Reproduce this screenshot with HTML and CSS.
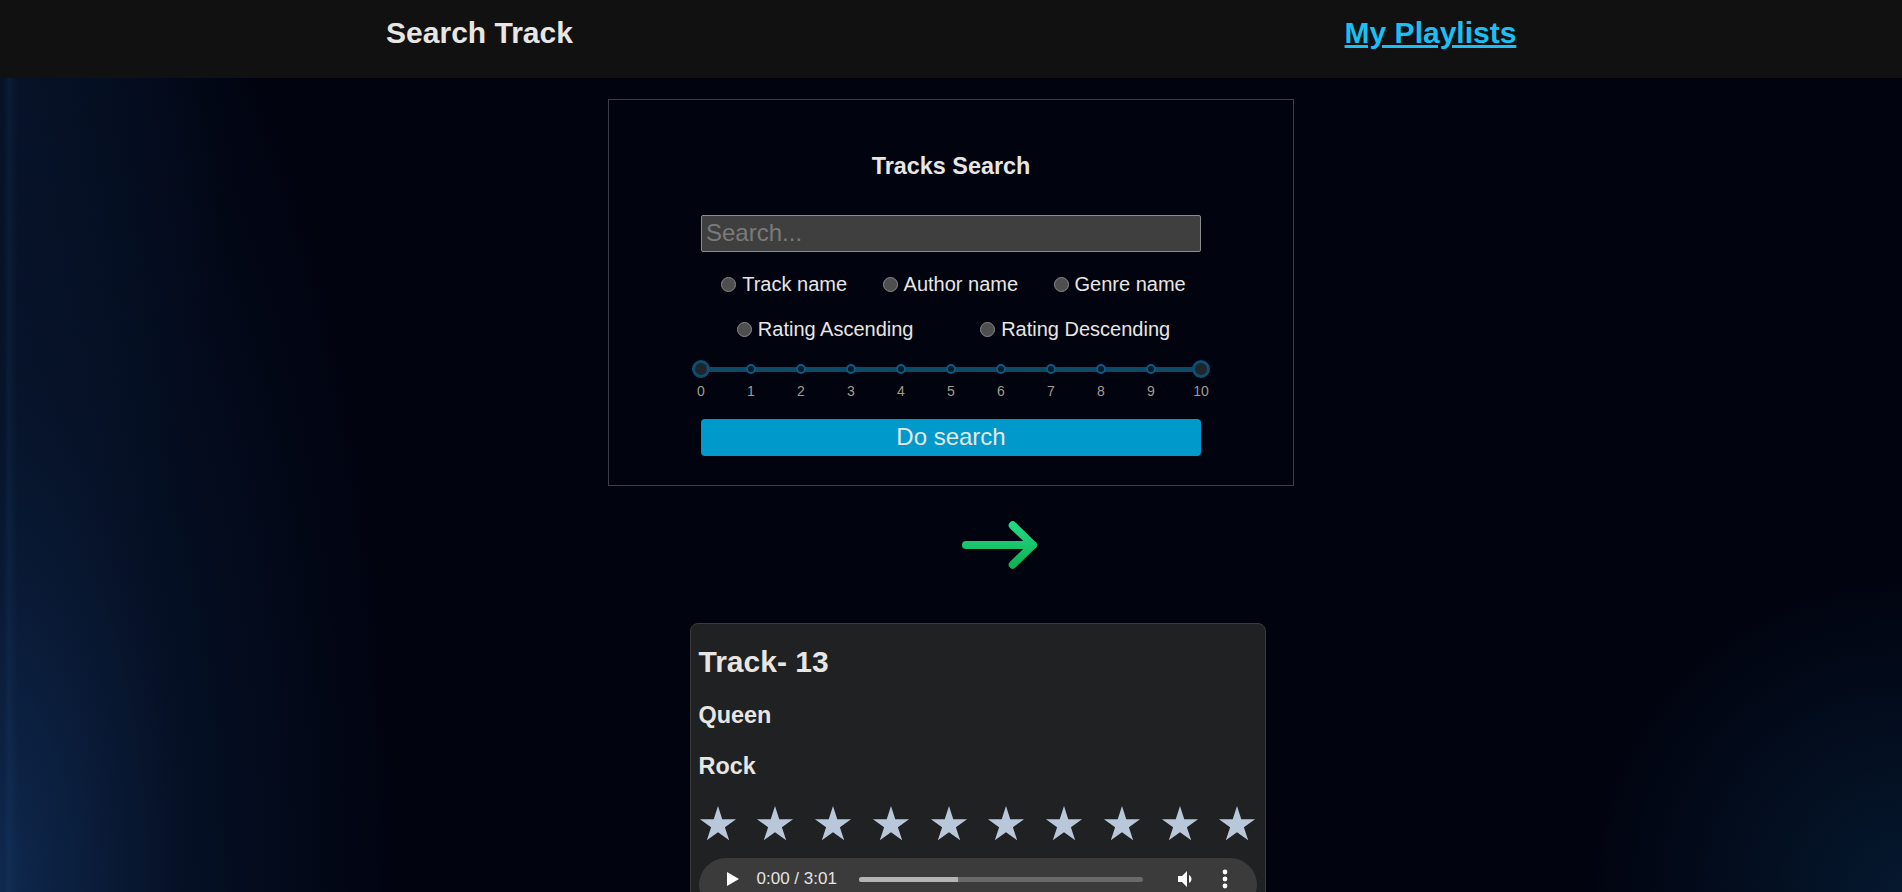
FILE: index.html
```html
<!DOCTYPE html>
<html lang="en">
<head>
<meta charset="utf-8">
<title>Search Track</title>
<link rel="stylesheet" href="styles.css">
</head>
<body>
<header class="topbar">
  <div class="topbar-cell"><h2 class="topbar-title">Search Track</h2></div>
  <div class="topbar-cell"><a class="topbar-link" href="#">My Playlists</a></div>
</header>

<main class="page">
  <section class="search-panel">
    <h3 class="panel-title">Tracks Search</h3>
    <input class="search-input" type="text" placeholder="Search...">

    <div class="option-row option-row--first">
      <label class="option"><input class="option-radio" type="radio" name="field">Track name</label>
      <label class="option"><input class="option-radio" type="radio" name="field">Author name</label>
      <label class="option"><input class="option-radio" type="radio" name="field">Genre name</label>
    </div>
    <div class="option-row option-row--second">
      <label class="option"><input class="option-radio" type="radio" name="order">Rating Ascending</label>
      <label class="option"><input class="option-radio" type="radio" name="order">Rating Descending</label>
    </div>

    <div class="rating-range">
      <div class="range-track">
        <span class="range-dot range-dot--handle"></span>
        <span class="range-dot"></span>
        <span class="range-dot"></span>
        <span class="range-dot"></span>
        <span class="range-dot"></span>
        <span class="range-dot"></span>
        <span class="range-dot"></span>
        <span class="range-dot"></span>
        <span class="range-dot"></span>
        <span class="range-dot"></span>
        <span class="range-dot range-dot--handle"></span>
      </div>
      <div class="range-labels">
        <span class="range-label">0</span>
        <span class="range-label">1</span>
        <span class="range-label">2</span>
        <span class="range-label">3</span>
        <span class="range-label">4</span>
        <span class="range-label">5</span>
        <span class="range-label">6</span>
        <span class="range-label">7</span>
        <span class="range-label">8</span>
        <span class="range-label">9</span>
        <span class="range-label">10</span>
      </div>
    </div>

    <button class="search-btn" type="button">Do search</button>
  </section>

  <div class="arrow-wrap">
    <svg class="arrow-icon" width="80" height="56" viewBox="0 0 80 56">
      <defs>
        <linearGradient id="arrowGrad" x1="0" y1="0" x2="0" y2="1">
          <stop offset="0" stop-color="#23d883"/>
          <stop offset="1" stop-color="#0fb257"/>
        </linearGradient>
      </defs>
      <path d="M8 28 H75 M54.7 8.3 L75 28 L54.7 47.7" fill="none" stroke="url(#arrowGrad)" stroke-width="8" stroke-linecap="round" stroke-linejoin="round"/>
    </svg>
  </div>

  <article class="track-card">
    <h2 class="track-title">Track- 13</h2>
    <h3 class="track-meta">Queen</h3>
    <h3 class="track-meta">Rock</h3>
    <div class="stars">
      <svg class="star" width="38" height="35" viewBox="0 0 38 35"><polygon points="19,0 23.27,13.13 37.07,13.13 25.9,21.24 30.17,34.37 19,26.26 7.83,34.37 12.1,21.24 0.93,13.13 14.73,13.13"/></svg>
      <svg class="star" width="38" height="35" viewBox="0 0 38 35"><polygon points="19,0 23.27,13.13 37.07,13.13 25.9,21.24 30.17,34.37 19,26.26 7.83,34.37 12.1,21.24 0.93,13.13 14.73,13.13"/></svg>
      <svg class="star" width="38" height="35" viewBox="0 0 38 35"><polygon points="19,0 23.27,13.13 37.07,13.13 25.9,21.24 30.17,34.37 19,26.26 7.83,34.37 12.1,21.24 0.93,13.13 14.73,13.13"/></svg>
      <svg class="star" width="38" height="35" viewBox="0 0 38 35"><polygon points="19,0 23.27,13.13 37.07,13.13 25.9,21.24 30.17,34.37 19,26.26 7.83,34.37 12.1,21.24 0.93,13.13 14.73,13.13"/></svg>
      <svg class="star" width="38" height="35" viewBox="0 0 38 35"><polygon points="19,0 23.27,13.13 37.07,13.13 25.9,21.24 30.17,34.37 19,26.26 7.83,34.37 12.1,21.24 0.93,13.13 14.73,13.13"/></svg>
      <svg class="star" width="38" height="35" viewBox="0 0 38 35"><polygon points="19,0 23.27,13.13 37.07,13.13 25.9,21.24 30.17,34.37 19,26.26 7.83,34.37 12.1,21.24 0.93,13.13 14.73,13.13"/></svg>
      <svg class="star" width="38" height="35" viewBox="0 0 38 35"><polygon points="19,0 23.27,13.13 37.07,13.13 25.9,21.24 30.17,34.37 19,26.26 7.83,34.37 12.1,21.24 0.93,13.13 14.73,13.13"/></svg>
      <svg class="star" width="38" height="35" viewBox="0 0 38 35"><polygon points="19,0 23.27,13.13 37.07,13.13 25.9,21.24 30.17,34.37 19,26.26 7.83,34.37 12.1,21.24 0.93,13.13 14.73,13.13"/></svg>
      <svg class="star" width="38" height="35" viewBox="0 0 38 35"><polygon points="19,0 23.27,13.13 37.07,13.13 25.9,21.24 30.17,34.37 19,26.26 7.83,34.37 12.1,21.24 0.93,13.13 14.73,13.13"/></svg>
      <svg class="star" width="38" height="35" viewBox="0 0 38 35"><polygon points="19,0 23.27,13.13 37.07,13.13 25.9,21.24 30.17,34.37 19,26.26 7.83,34.37 12.1,21.24 0.93,13.13 14.73,13.13"/></svg>
    </div>

    <div class="player">
      <div class="player-row">
        <svg class="player-play" width="12" height="14" viewBox="0 0 12 14"><polygon points="0,0 12,7 0,14"/></svg>
        <span class="player-time">0:00 / 3:01</span>
        <div class="player-bar"><div class="player-bar-fill" style="width:35%"></div></div>
        <svg class="player-volume" width="24" height="24" viewBox="0 0 24 24"><path d="M18.5 12c0-1.770-1.020-3.290-2.500-4.030v8.050c1.480-.730 2.500-2.250 2.500-4.020zM5 9v6h4l5 5V4L9 9H5z"/></svg>
        <svg class="player-menu" width="6" height="22" viewBox="0 0 6 22"><circle cx="3" cy="4" r="2.4"/><circle cx="3" cy="11" r="2.4"/><circle cx="3" cy="18" r="2.4"/></svg>
      </div>
    </div>
  </article>
</main>
</body>
</html>
```

FILE: styles.css
```css
*,
*::before,
*::after {
  box-sizing: border-box;
}

html {
  background: #01030f;
  scrollbar-width: none;
}

::-webkit-scrollbar {
  display: none;
}

body {
  margin: 0;
  min-height: 100vh;
  font-family: "Liberation Sans", Arial, sans-serif;
  font-size: 20px;
  color: #e8e6e3;
  background-color: #01030f;
  background-image:
    linear-gradient(90deg, transparent 4px, rgba(35, 80, 135, 0.16) 9px, rgba(35, 80, 135, 0.06) 14px, transparent 18px),
    radial-gradient(ellipse 240px 700px at 0 0, rgba(10, 28, 55, 0.55), rgba(10, 28, 55, 0) 100%),
    radial-gradient(ellipse 400px 1100px at 0 100%, rgba(16, 44, 84, 0.92), rgba(10, 30, 60, 0.5) 45%, rgba(4, 12, 28, 0) 100%),
    radial-gradient(ellipse 320px 320px at 100% 100%, rgba(6, 28, 52, 0.85), rgba(6, 28, 52, 0) 100%);
  background-repeat: no-repeat;
  background-attachment: fixed;
}

/* ---------- top bar ---------- */
.topbar {
  display: flex;
  height: 78px;
  background: #121111;
}

.topbar-cell {
  flex: 1;
  text-align: center;
  padding-top: 16px;
  padding-left: 8px;
}

.topbar-title {
  margin: 0;
  font-size: 30px;
  font-weight: bold;
  line-height: 34.5px;
  color: #e8e6e3;
}

.topbar-link {
  font-size: 30px;
  font-weight: bold;
  line-height: 34.5px;
  color: #1cbff3;
  text-decoration: underline;
}

/* ---------- page ---------- */
.page {
  display: flex;
  flex-direction: column;
  align-items: center;
  padding: 21px 0 40px;
}

.search-panel {
  width: 686px;
  border: 1px solid #3c3f47;
  padding: 29px 0;
  display: flex;
  flex-direction: column;
  align-items: center;
}

.panel-title {
  margin: 24px 0 0;
  font-size: 23.4px;
  font-weight: bold;
  line-height: 27px;
}

.search-input {
  margin-top: 34.5px;
  width: 500px;
  height: 37.5px;
  padding: 0 4px;
  font-family: "Liberation Sans", Arial, sans-serif;
  font-size: 24px;
  color: #e8e6e3;
  background: #3f3f3f;
  border: 1px solid #8b8b8b;
  border-radius: 2px;
  outline: none;
}

.search-input::placeholder {
  color: #7a7a7a;
}

.option-row {
  width: 500px;
  height: 23px;
  display: flex;
  justify-content: space-around;
  align-items: center;
}

.option-row--first {
  margin-top: 21px;
}

.option-row--second {
  margin-top: 22px;
}

.option {
  display: flex;
  align-items: center;
  gap: 6px;
  font-size: 20px;
  line-height: 23px;
  color: #e8e6e3;
}

.option-radio {
  appearance: none;
  -webkit-appearance: none;
  flex: none;
  width: 15px;
  height: 15px;
  margin: 0 0 0 5px;
  border-radius: 50%;
  background: #4e4e4e;
  border: 1px solid #8a8a8a;
}

/* ---------- rating range ---------- */
.rating-range {
  margin-top: 19px;
  width: 518px;
}

.range-track {
  display: flex;
  justify-content: space-between;
  align-items: center;
  height: 18px;
  background: linear-gradient(#0c4a68, #0c4a68) center / 500px 5px no-repeat;
}

.range-dot {
  flex: none;
  width: 18px;
  height: 18px;
  display: flex;
  align-items: center;
  justify-content: center;
}

.range-dot::before {
  content: "";
  flex: none;
  width: 10px;
  height: 10px;
  border-radius: 50%;
  background: #0a1a27;
  border: 2px solid #0c5a86;
}

.range-dot--handle::before {
  width: 18px;
  height: 18px;
  background: #1f2529;
  border: 3px solid #0d4f72;
}

.range-labels {
  display: flex;
  justify-content: space-between;
  margin-top: 5px;
}

.range-label {
  width: 18px;
  text-align: center;
  font-size: 14px;
  line-height: 16px;
  color: #a39a8e;
}

.search-btn {
  margin-top: 20px;
  width: 500px;
  height: 36.5px;
  padding: 0;
  background: #0099cc;
  border: none;
  border-radius: 4px;
  color: #e8e6e3;
  font-family: "Liberation Sans", Arial, sans-serif;
  font-size: 24px;
}

/* ---------- arrow ---------- */
.arrow-wrap {
  margin-top: 31px;
  margin-left: 94px;
  width: 80px;
  height: 56px;
}

.arrow-icon {
  display: block;
}

/* ---------- track card ---------- */
.track-card {
  margin-top: 50px;
  margin-left: 53px;
  width: 576px;
  padding: 0 8px 8px;
  background: #202122;
  border: 1px solid #3b3b3b;
  border-radius: 8px;
}

.track-title {
  margin: 21px 0 23px;
  font-size: 30px;
  line-height: 34.5px;
  font-weight: bold;
}

.track-meta {
  margin: 0 0 24px;
  font-size: 23.4px;
  line-height: 27px;
  font-weight: bold;
}

.stars {
  display: flex;
  justify-content: space-between;
  padding-top: 2px;
}

.star {
  display: block;
  fill: #b8c7d9;
}

.player {
  margin-top: 17px;
  height: 54px;
  border-radius: 27px;
  background: #3b3b3b;
}

.player-row {
  height: 42px;
  display: flex;
  align-items: center;
  padding-left: 28px;
}

.player-play {
  display: block;
  fill: #ffffff;
  flex: none;
}

.player-time {
  margin-left: 18px;
  font-family: "Liberation Sans", Arial, sans-serif;
  font-size: 17px;
  color: #e3e3e3;
  white-space: nowrap;
}

.player-bar {
  margin-left: 22px;
  width: 284px;
  height: 5px;
  border-radius: 3px;
  background: #6a6a6a;
  overflow: hidden;
}

.player-bar-fill {
  height: 100%;
  background: #b4b4b4;
}

.player-volume {
  display: block;
  margin-left: 30px;
  fill: #ffffff;
  flex: none;
}

.player-menu {
  display: block;
  margin-left: 25px;
  fill: #ffffff;
  flex: none;
}
```
